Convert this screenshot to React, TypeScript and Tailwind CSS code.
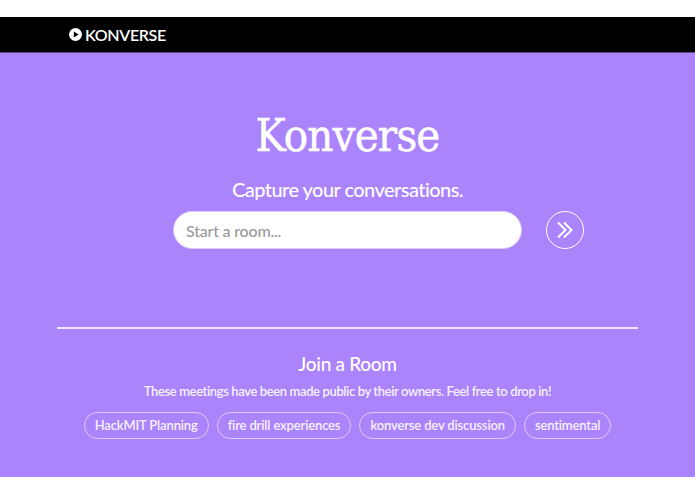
import React from 'react';

const rooms = ['HackMIT Planning', 'fire drill experiences', 'konverse dev discussion', 'sentimental'];

function Logo() {
  return (
    <svg width="13" height="13" viewBox="0 0 13 13" className="shrink-0">
      <circle cx="6.5" cy="6.5" r="6.5" fill="#fff" />
      <path d="M4.8 3.4 L9.6 6.5 L4.8 9.6 Z" fill="#000" />
    </svg>
  );
}

export default function App() {
  return (
    <div className="h-[494px] w-[695px] bg-white pt-[17px] font-['Lato',sans-serif] text-white [font-variant-ligatures:none]">
      <header className="flex h-[36px] items-center gap-[3px] border-b border-[#5d4a8a] bg-black pl-[69px]">
        <Logo />
        <span className="text-[16px] font-semibold tracking-[-0.35px]">KONVERSE</span>
      </header>

      <main className="flex h-[424px] flex-col items-center bg-[#ab84fc]">
        <h1 className="mt-[53px] font-['DejaVu_Serif_Condensed','DejaVu_Serif',serif] text-[45px] leading-[60px] tracking-[-0.8px] [-webkit-text-stroke:0.5px_white]">Konverse</h1>
        <p className="mt-[11px] text-[20px] font-medium leading-[24px] tracking-[-0.55px]">Capture your conversations.</p>

        <div className="relative mt-[10px] h-[38px] w-[349px]">
          <input
            readOnly
            placeholder="Start a room..."
            className="h-full w-full rounded-full border border-[#d9cbf5] bg-white px-[12px] text-[16px] font-medium tracking-[-0.2px] text-[#555] outline-none placeholder:text-[#999]"
          />
          <button className="absolute left-[373px] top-0 flex h-[38px] w-[38px] items-center justify-center rounded-full border-[1.5px] border-white">
            <svg width="18" height="18" viewBox="0 0 18 18" fill="none" stroke="#fff" strokeWidth="2">
              <path d="M2 1.5 L9.5 9 L2 16.5" />
              <path d="M8 1.5 L15.5 9 L8 16.5" />
            </svg>
          </button>
        </div>

        <hr className="mt-[78px] w-[581px] border-t-2 border-[#eee6fe]" />

        <h2 className="mt-[23px] text-[19px] font-medium leading-[24px] tracking-[-0.3px]">Join a Room</h2>
        <p className="mt-[6px] text-[13px] font-semibold leading-[18px] tracking-[-0.38px] text-[#f6f1ff]">
          These meetings have been made public by their owners. Feel free to drop in!
        </p>
        <div className="mt-[12px] flex gap-[8px]">
          {rooms.map((room) => (
            <span
              key={room}
              className="flex h-[27px] items-center rounded-full border border-[#dccdfd] px-[10px] text-[13px] font-semibold tracking-[-0.15px] text-[#f6f1ff]"
            >
              {room}
            </span>
          ))}
        </div>
      </main>
    </div>
  );
}
